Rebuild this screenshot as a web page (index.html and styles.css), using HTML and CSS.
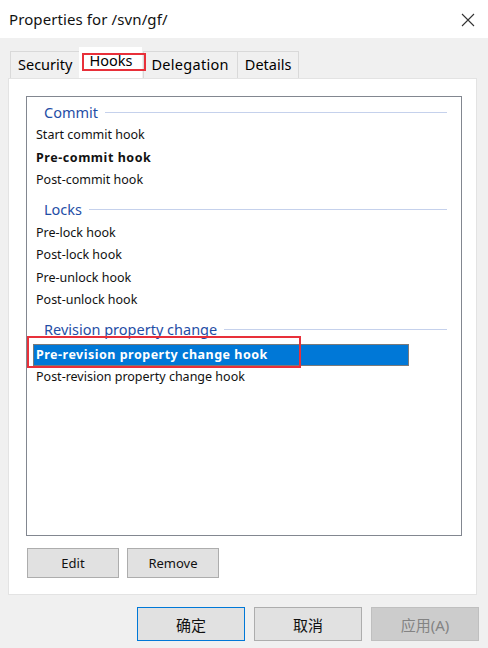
FILE: index.html
```html
<!DOCTYPE html>
<html lang="en">
    <head>
        <meta charset="UTF-8" />
        <title>Properties for /svn/gf/</title>
        <link rel="stylesheet" href="styles.css">
    </head>
    <body>
        <div class="titlebar">
            <span class="title">Properties for /svn/gf/</span>
            <span class="close">
                <svg width="14" height="14" viewBox="0 0 14 14">
                    <path d="M1 1 L13 13 M13 1 L1 13" stroke="#333" stroke-width="1.1" fill="none" />
                </svg>
            </span>
        </div>

        <div class="dialog">
            <div class="tabs">
                <div class="tab">Security</div>
                <div class="tab active">Hooks<span class="mark mark-tab"></span></div>
                <div class="tab">Delegation</div>
                <div class="tab">Details</div>
            </div>

            <div class="panel">
                <div class="listbox">
                    <div class="group">Commit</div>
                    <div class="item">Start commit hook</div>
                    <div class="item bold">Pre-commit hook</div>
                    <div class="item">Post-commit hook</div>

                    <div class="group">Locks</div>
                    <div class="item">Pre-lock hook</div>
                    <div class="item">Post-lock hook</div>
                    <div class="item">Pre-unlock hook</div>
                    <div class="item">Post-unlock hook</div>

                    <div class="group">Revision property change</div>
                    <div class="item selected">Pre-revision property change hook<span class="mark mark-item"></span></div>
                    <div class="item">Post-revision property change hook</div>
                </div>

                <div class="panel-buttons">
                    <button class="btn small">Edit</button>
                    <button class="btn small">Remove</button>
                </div>
            </div>

            <div class="footer">
                <button class="btn big default">确定</button>
                <button class="btn big">取消</button>
                <button class="btn big disabled">应用(A)</button>
            </div>
        </div>
    </body>
</html>
```

FILE: styles.css
```css
body {
    margin: 0;
    width: 488px;
    height: 648px;
    background: #f0f0f0;
    color: #000;
    font-family: 'Noto Sans', 'Noto Sans CJK SC', sans-serif;
    overflow: hidden;
}

.titlebar {
    height: 38px;
    background: #fff;
    display: flex;
    align-items: center;
    justify-content: space-between;
    padding: 0 13px 0 9px;
}
.title {
    font-size: 15px;
    color: #111;
    letter-spacing: 0.1px;
}
.close {
    display: flex;
    margin-top: 1px;
}

.dialog {
    padding: 10px 11px 0 8px;
}

.tabs {
    display: flex;
    align-items: flex-end;
    height: 30px;
    padding-left: 2px;
}
.tab {
    position: relative;
    height: 27px;
    line-height: 25px;
    padding: 0 7px;
    font-size: 14.5px;
    background: #f0f0f0;
    border: 1px solid #d9d9d9;
    border-bottom: none;
    margin-right: -1px;
    box-sizing: border-box;
}
.tab:nth-child(3) {
    padding: 0 8px 0 7px;
    letter-spacing: 0.3px;
}
.tab.active {
    height: 31px;
    line-height: 24px;
    background: #fff;
    border-color: #fff;
    padding: 0 9px;
    margin: 0 1px 0 0;
    z-index: 1;
}

.panel {
    background: #fff;
    height: 517px;
    box-sizing: border-box;
    border: 1px solid #e3e3e3;
    padding: 17px 14px 0 17px;
}

.listbox {
    position: relative;
    height: 440px;
    box-sizing: border-box;
    border: 1px solid #828790;
    padding: 2px 14px 0 9px;
    font-size: 12.5px;
}

.group {
    display: flex;
    align-items: center;
    gap: 7px;
    height: 25px;
    margin-top: 5px;
    padding-left: 8px;
    color: #1f4ea6;
    font-size: 14.5px;
}
.group:first-child {
    margin-top: 0;
}
.group::after {
    content: '';
    flex: 1;
    height: 1px;
    margin-top: 1px;
    background: #c5d1ec;
}

.item {
    position: relative;
    height: 22.5px;
    line-height: 22px;
    color: #111;
}
.item.bold {
    font-weight: bold;
    letter-spacing: 0.55px;
}
.item.selected {
    width: 376px;
    margin: 2px 0 0 -3px;
    padding-left: 2px;
    box-sizing: border-box;
    background: #0078d7;
    color: #fff;
    font-weight: bold;
    letter-spacing: 0.5px;
    border: 1px solid #7a7a7a;
    line-height: 20px;
}

.mark {
    position: absolute;
    border: 2px solid #e8303a;
    pointer-events: none;
}
.mark-tab {
    left: 2px;
    top: 5px;
    width: 60px;
    height: 14px;
}
.mark-item {
    left: -7px;
    top: -9px;
    width: 270px;
    height: 28px;
}

.panel-buttons {
    display: flex;
    gap: 8px;
    padding-top: 12px;
    padding-left: 1px;
}

.btn {
    font-family: inherit;
    background: #e1e1e1;
    border: 1px solid #adadad;
    color: #111;
    padding: 0;
    box-sizing: border-box;
}
.btn.small {
    width: 92px;
    height: 30px;
    font-size: 13px;
}
.btn.big {
    width: 108px;
    height: 34px;
    font-size: 15px;
}
.btn.default {
    border-color: #0078d7;
}
.btn.disabled {
    background: #cccccc;
    border-color: #bfbfbf;
    color: #838383;
}

.footer {
    display: flex;
    justify-content: flex-end;
    gap: 9px;
    padding-top: 12px;
    margin-right: -2px;
}
```
